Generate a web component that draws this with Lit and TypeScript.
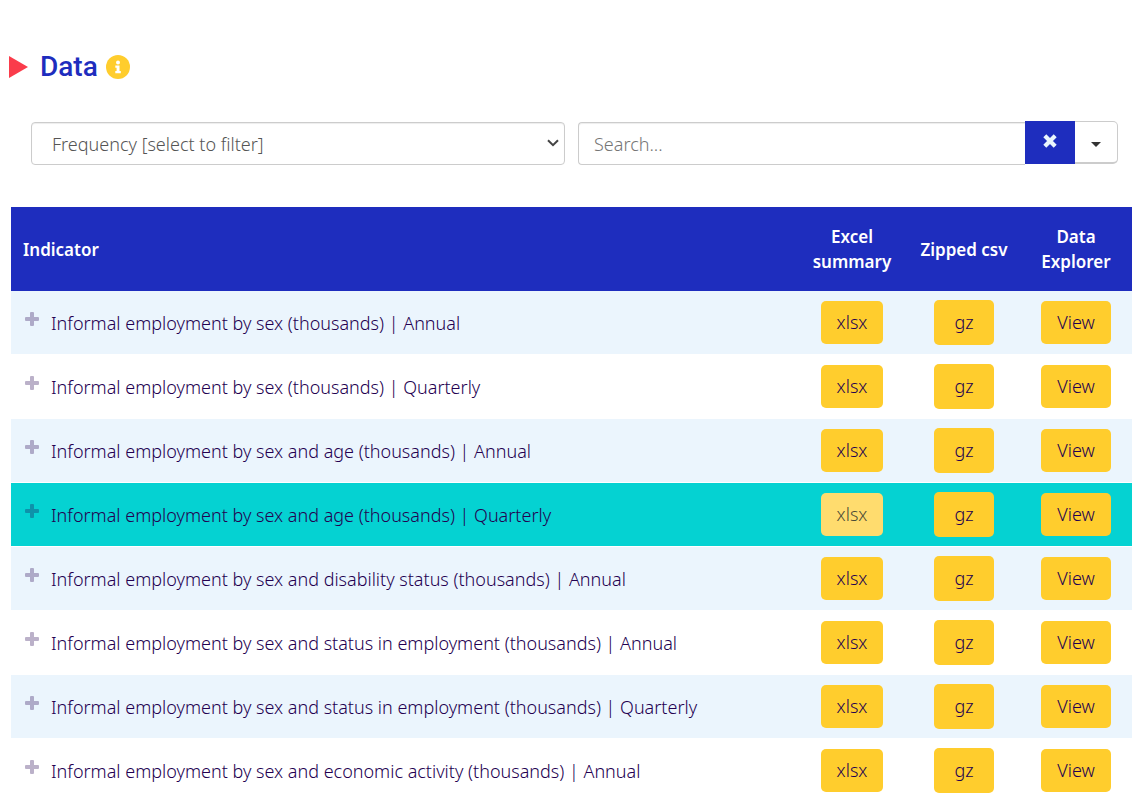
import { LitElement, html, css } from "lit";
import { customElement, property, state } from "lit/decorators.js";
import { classMap } from "lit/directives/class-map.js";

interface Indicator {
  label: string;
  frequency: string;
}

const INDICATORS: Indicator[] = [
  { label: "Informal employment by sex (thousands)", frequency: "Annual" },
  { label: "Informal employment by sex (thousands)", frequency: "Quarterly" },
  { label: "Informal employment by sex and age (thousands)", frequency: "Annual" },
  { label: "Informal employment by sex and age (thousands)", frequency: "Quarterly" },
  { label: "Informal employment by sex and disability status (thousands)", frequency: "Annual" },
  { label: "Informal employment by sex and status in employment (thousands)", frequency: "Annual" },
  { label: "Informal employment by sex and status in employment (thousands)", frequency: "Quarterly" },
  { label: "Informal employment by sex and economic activity (thousands)", frequency: "Annual" },
];

@customElement("data-filters")
export class DataFilters extends LitElement {
  static styles = css`
    :host {
      display: grid;
      grid-template-columns: 534fr 540fr;
      align-items: start;
      gap: 13px;
      padding: 0 18px 0 31px;
    }
    .select,
    .search {
      box-sizing: border-box;
      width: 100%;
      height: 43px;
      margin: 1px 0 0;
      border: 1px solid #ccc;
      border-radius: 4px;
      background: #fff;
      box-shadow: inset 0 1px 1px rgba(0, 0, 0, 0.075);
      color: #555;
      font: inherit;
    }
    .picker {
      display: grid;
      align-items: center;
    }
    .picker > * {
      grid-area: 1 / 1;
    }
    .select {
      padding: 0 20px;
      appearance: none;
    }
    .chevron {
      justify-self: end;
      margin-right: 6px;
      pointer-events: none;
    }
    .search {
      flex: 1;
      min-width: 0;
      padding: 0 15px;
      border-right: 0;
      border-radius: 4px 0 0 4px;
    }
    .search::placeholder {
      color: #757575;
      opacity: 1;
    }
    .group {
      display: flex;
    }
    .clear,
    .toggle {
      display: flex;
      align-items: center;
      justify-content: center;
      height: 43px;
      margin: 0;
      padding: 0;
      cursor: pointer;
    }
    .clear {
      width: 50px;
      padding-bottom: 4px;
      border: 0;
      background: #1e2dbe;
      color: #ebf5fd;
    }
    .toggle {
      width: 43px;
      padding-top: 4px;
      border: 1px solid #ccc;
      border-left: 0;
      border-bottom-width: 2px;
      border-radius: 0 5px 5px 0;
      background: #fff;
      color: #333;
    }
  `;

  render() {
    return html`
      <div class="picker">
        <select class="select" aria-label="Frequency">
          <option>Frequency [select to filter]</option>
          <option>Annual</option>
          <option>Quarterly</option>
        </select>
        <svg class="chevron" width="12" height="8" viewBox="0 0 12 8" fill="none" stroke="#444" stroke-width="2">
          <path d="M1 1.2 6 6.2 11 1.2" />
        </svg>
      </div>
      <div class="group">
        <input class="search" type="text" placeholder="Search..." aria-label="Search" />
        <button class="clear" type="button" aria-label="Clear search">
          <svg width="14" height="14" viewBox="0 0 14 14" fill="none" stroke="currentColor" stroke-width="4.2">
            <path d="M1.8 1.8 12.2 12.2M12.2 1.8 1.8 12.2" />
          </svg>
        </button>
        <button class="toggle" type="button" aria-label="Search options">
          <svg width="10" height="5" viewBox="0 0 10 5" fill="currentColor"><path d="M0 0h10L5 5z" /></svg>
        </button>
      </div>
    `;
  }
}

@customElement("indicator-table")
export class IndicatorTable extends LitElement {
  @property({ attribute: false }) rows: Indicator[] = [];
  @state() private active = 3;

  static styles = css`
    :host {
      display: block;
      padding: 0 4px 0 11px;
    }
    .table {
      width: 100%;
      table-layout: fixed;
      border-collapse: separate;
      border-spacing: 0;
    }
    .narrow {
      width: 112px;
    }
    .head {
      box-sizing: border-box;
      height: 84px;
      padding: 0 11px;
      background: #1e2dbe;
      color: #fff;
      font-size: 17px;
      line-height: 25px;
      font-weight: 600;
      text-align: center;
      vertical-align: middle;
    }
    .head.first {
      padding: 0 12px;
      text-align: left;
    }
    .cell {
      box-sizing: border-box;
      height: 64px;
      padding: 0;
      border-bottom: 1px solid #fff;
      text-align: center;
      vertical-align: middle;
    }
    .name {
      display: flex;
      align-items: center;
      gap: 12px;
      padding: 0 14px;
      text-align: left;
    }
    .striped {
      background: #ebf5fd;
    }
    .active {
      background: #05d2d2;
    }
    .expand {
      display: flex;
      margin: 0;
      padding: 0 0 7px;
      border: 0;
      background: none;
      color: #230050;
      opacity: 0.3;
      cursor: pointer;
    }
    .button {
      display: inline-block;
      box-sizing: border-box;
      height: 43px;
      padding: 0 16px;
      border: 0;
      border-radius: 5px;
      background: #ffcd2d;
      color: #230050;
      font: inherit;
      line-height: 43px;
      text-decoration: none;
      vertical-align: middle;
      cursor: pointer;
    }
    .button.tall {
      height: 45px;
      padding: 0 20px;
      line-height: 45px;
    }
    .button.hover {
      background: #ffdc6e;
      color: #4b4b37;
    }
  `;

  render() {
    return html`
      <table class="table">
        <thead>
          <tr>
            <th class="head first" scope="col">Indicator</th>
            <th class="head narrow" scope="col">Excel summary</th>
            <th class="head narrow" scope="col">Zipped csv</th>
            <th class="head narrow" scope="col">Data Explorer</th>
          </tr>
        </thead>
        <tbody>
          ${this.rows.map(
            (row, i) => html`
              <tr
                class=${classMap({ striped: i % 2 === 0, active: i === this.active })}
                @mouseenter=${() => (this.active = i)}
              >
                <td class="cell">
                  <div class="name">
                    <button class="expand" type="button" aria-label="Show details">
                      <svg width="14" height="14" viewBox="0 0 14 14" fill="currentColor">
                        <path d="M6 0h2q1 0 1 1v4h4q1 0 1 1v2q0 1-1 1H9v4q0 1-1 1H6q-1 0-1-1V9H1Q0 9 0 8V6q0-1 1-1h4V1q0-1 1-1z" />
                      </svg>
                    </button>
                    <span>${row.label} | ${row.frequency}</span>
                  </div>
                </td>
                <td class="cell">
                  <a class=${classMap({ button: true, hover: i === this.active })} href="#xlsx">xlsx</a>
                </td>
                <td class="cell"><button class="button tall" type="button">gz</button></td>
                <td class="cell"><a class="button" href="#view">View</a></td>
              </tr>
            `,
          )}
        </tbody>
      </table>
    `;
  }
}

@customElement("app-root")
export class AppRoot extends LitElement {
  static styles = css`
    :host {
      display: block;
      padding-top: 48px;
      background: #fff;
      color: #230050;
      font-family: "Noto Sans", sans-serif;
      font-size: 18px;
      font-weight: 350;
      line-height: 24px;
    }
    .heading {
      display: flex;
      align-items: center;
      gap: 8px;
      margin: 0;
      padding-left: 9px;
      color: #1e2dbe;
      font-family: Roboto, "Noto Sans", sans-serif;
      font-size: 28px;
      line-height: 38px;
      font-weight: 500;
    }
    .marker {
      margin-right: 4px;
    }
    .info {
      display: flex;
      margin: 0;
      padding: 0;
      border: 0;
      background: none;
      cursor: pointer;
    }
    .filters {
      margin: 35px 0 42px;
    }
  `;

  render() {
    return html`
      <h2 class="heading">
        <svg class="marker" width="19" height="22" viewBox="0 0 19 22"><path d="M0 0 19 11 0 22z" fill="#fa3c4b" /></svg>
        <span>Data</span>
        <button class="info" type="button" aria-label="About the data">
          <svg width="24" height="24" viewBox="0 0 24 24">
            <circle cx="12" cy="12" r="12" fill="#ffcd2d" />
            <circle cx="12" cy="7.6" r="2" fill="#fff" />
            <path d="M9.3 10.6h4.2v5.5h1.3v2.1H9.3v-2.1h1.3v-3.4H9.3z" fill="#fff" />
          </svg>
        </button>
      </h2>
      <data-filters class="filters"></data-filters>
      <indicator-table .rows=${INDICATORS}></indicator-table>
    `;
  }
}
